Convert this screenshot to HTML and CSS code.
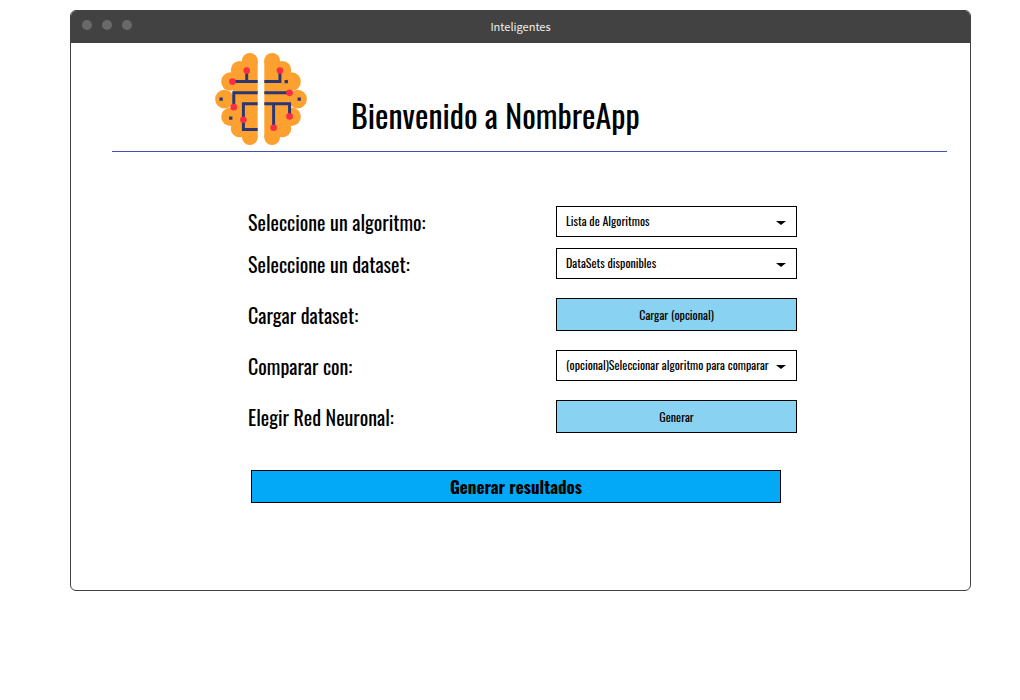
FILE: index.html
```html
<!DOCTYPE html>
<html lang="es">
<head>
<meta charset="utf-8">
<title>Inteligentes</title>
<link rel="stylesheet" href="styles.css">
</head>
<body>
<div class="window">
  <div class="titlebar">
    <div class="dots"><span class="dot"></span><span class="dot"></span><span class="dot"></span></div>
    <span class="window-title">Inteligentes</span>
  </div>
  <header class="header">
    <svg class="logo" viewBox="30 23 276 277" aria-hidden="true">
      <defs>
        <g id="lobe" fill="#fca130">
          <path d="M158 47v229h-46l-28-36V84l28-37z"/>
          <circle cx="134.500" cy="47" r="24"/>
          <circle cx="104" cy="74" r="27"/>
          <circle cx="76" cy="109" r="28"/>
          <circle cx="58" cy="162" r="28"/>
          <circle cx="76" cy="215" r="28"/>
          <circle cx="104" cy="250" r="27"/>
          <circle cx="134.500" cy="276" r="24"/>
        </g>
      </defs>
      <use href="#lobe"/>
      <use href="#lobe" transform="matrix(-1 0 0 1 336 0)"/>
      <g fill="none" stroke="#2b3672" stroke-width="9">
        <path d="M82 109h76M125 76v33M86 186v-43h72M158 176h-43v77h43"/>
        <path d="M178 109h47V76M178 143h76M178 176h76v38M206 176v72"/>
      </g>
      <g fill="#2b3672">
        <path d="M43 157h10v10H43zM72 214h10v10H72zM239 104h10v10h-10zM278 157h10v10h-10z"/>
      </g>
      <g fill="#fb2c46">
        <circle cx="125" cy="76" r="10"/><circle cx="82" cy="109" r="10"/>
        <circle cx="86" cy="186" r="10"/><circle cx="115" cy="224" r="10"/>
        <circle cx="225" cy="76" r="10"/><circle cx="254" cy="143" r="10"/>
        <circle cx="254" cy="214" r="10"/><circle cx="206" cy="248" r="10"/>
      </g>
    </svg>
    <h1 class="heading">Bienvenido a NombreApp</h1>
  </header>
  <form class="form">
    <div class="group">
      <div class="row">
        <label class="label" for="algoritmo">Seleccione un algoritmo:</label>
        <div class="select-box">
          <select class="control select" id="algoritmo"><option>Lista de Algoritmos</option></select>
          <svg class="arrow" viewBox="0 0 10 4" aria-hidden="true"><path d="M0 0h10L5 4z"/></svg>
        </div>
      </div>
      <div class="row">
        <label class="label" for="dataset">Seleccione un dataset:</label>
        <div class="select-box">
          <select class="control select" id="dataset"><option>DataSets disponibles</option></select>
          <svg class="arrow" viewBox="0 0 10 4" aria-hidden="true"><path d="M0 0h10L5 4z"/></svg>
        </div>
      </div>
    </div>
    <div class="row">
      <label class="label" for="cargar">Cargar dataset:</label>
      <button class="control button" id="cargar" type="button">Cargar (opcional)</button>
    </div>
    <div class="row">
      <label class="label" for="comparar">Comparar con:</label>
      <div class="select-box">
        <select class="control select" id="comparar"><option>(opcional)Seleccionar algoritmo para comparar</option></select>
        <svg class="arrow" viewBox="0 0 10 4" aria-hidden="true"><path d="M0 0h10L5 4z"/></svg>
      </div>
    </div>
    <div class="row">
      <label class="label" for="red">Elegir Red Neuronal:</label>
      <button class="control button" id="red" type="button">Generar</button>
    </div>
    <button class="submit" type="submit">Generar resultados</button>
  </form>
</div>
</body>
</html>
```
FILE: styles.css
```css
* {
  box-sizing: border-box;
}

body {
  margin: 0;
  padding: 10px 49px 0 70px;
  background: #fff;
  color: #000;
  font-family: Oswald, "Liberation Sans Narrow", sans-serif;
}

.window {
  border: 1px solid #424242;
  border-radius: 6px;
  overflow: hidden;
  padding-bottom: 87px;
}

.titlebar {
  display: grid;
  grid-template-columns: 1fr auto 1fr;
  align-items: center;
  height: 32px;
  padding: 0 11px;
  background: #424242;
}

.dots {
  display: flex;
  gap: 10px;
  padding-bottom: 4px;
}

.dot {
  width: 10px;
  height: 10px;
  border-radius: 50%;
  background: #696969;
}

.window-title {
  padding-bottom: 2px;
  color: #f0f0f0;
  font-family: "Source Sans Pro", "Noto Sans CJK SC", "Noto Sans", sans-serif;
  font-size: 11px;
  line-height: 16px;
}

.header {
  display: flex;
  align-items: flex-end;
  gap: 44px;
  margin: 0 23px 0 41px;
  padding: 10px 0 6px 103px;
  border-bottom: 1px solid #3f51b5;
}

.logo {
  width: 92px;
  height: 92px;
}

.heading {
  margin: 0;
  padding-bottom: 9px;
  font-size: 32px;
  line-height: 42px;
  font-weight: 400;
  white-space: nowrap;
}

.form {
  display: flex;
  flex-direction: column;
  gap: 19px;
  margin: 54px 173px 0 177px;
}

.group {
  display: flex;
  flex-direction: column;
  gap: 11px;
}

.row {
  display: grid;
  grid-template-columns: 308px 1fr;
  align-items: center;
}

.label {
  font-size: 20px;
  line-height: 30px;
  white-space: nowrap;
}

.control {
  width: 100%;
  border: 1px solid #000;
  border-radius: 0;
  color: #000;
  font-family: inherit;
  font-size: 12px;
  line-height: 18px;
}

.select-box {
  display: flex;
  position: relative;
}

.select {
  appearance: none;
  height: 31px;
  padding: 0 20px 2px 9px;
  background: #fff;
}

.arrow {
  position: absolute;
  right: 11px;
  top: 15px;
  width: 10px;
  height: 4px;
  pointer-events: none;
}

.button {
  height: 33px;
  padding: 0;
  background: #8ad2f1;
}

.submit {
  height: 33px;
  margin: 18px 16px 0 3px;
  padding: 0;
  border: 1px solid #000;
  background: #03a9f7;
  color: #000;
  font-family: inherit;
  font-size: 17px;
  font-weight: 700;
}
```
